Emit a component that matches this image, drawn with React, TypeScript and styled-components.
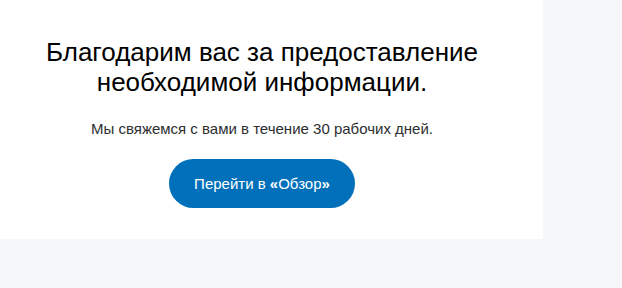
import React from "react";
import styled, { createGlobalStyle } from "styled-components";

const GlobalStyle = createGlobalStyle`
  html, body {
    margin: 0;
    padding: 0;
    background: #f5f7fa;
    font-family: "Liberation Sans", Arial, sans-serif;
  }
`;

const Page = styled.div`
  width: 622px;
  height: 288px;
  background: #f5f7fa;
`;

const Panel = styled.section`
  width: 543px;
  box-sizing: border-box;
  background: #ffffff;
  padding: 37px 19px 31px 0;
  display: flex;
  flex-direction: column;
  align-items: center;
`;

const Heading = styled.h1`
  margin: 0;
  font-size: 26px;
  line-height: 30px;
  font-weight: 400;
  color: #000000;
  text-align: center;
`;

const Note = styled.p`
  margin: 22px 0 0;
  font-size: 15px;
  line-height: 20px;
  color: #2c2e2f;
  text-align: center;
`;

const PrimaryButton = styled.button`
  margin-top: 20px;
  height: 49px;
  padding: 0 25px;
  border: none;
  border-radius: 25px;
  background: #0070ba;
  color: #ffffff;
  font-family: "Liberation Sans", Arial, sans-serif;
  font-size: 15px;
  cursor: pointer;

  b {
    font-weight: 700;
  }
`;

export default function App() {
  return (
    <>
      <GlobalStyle />
      <Page>
        <Panel>
          <Heading>
            Благодарим вас за предоставление
            <br />
            необходимой информации.
          </Heading>
          <Note>Мы свяжемся с вами в течение 30 рабочих дней.</Note>
          <PrimaryButton>
            Перейти в <b>«</b>Обзор<b>»</b>
          </PrimaryButton>
        </Panel>
      </Page>
    </>
  );
}
